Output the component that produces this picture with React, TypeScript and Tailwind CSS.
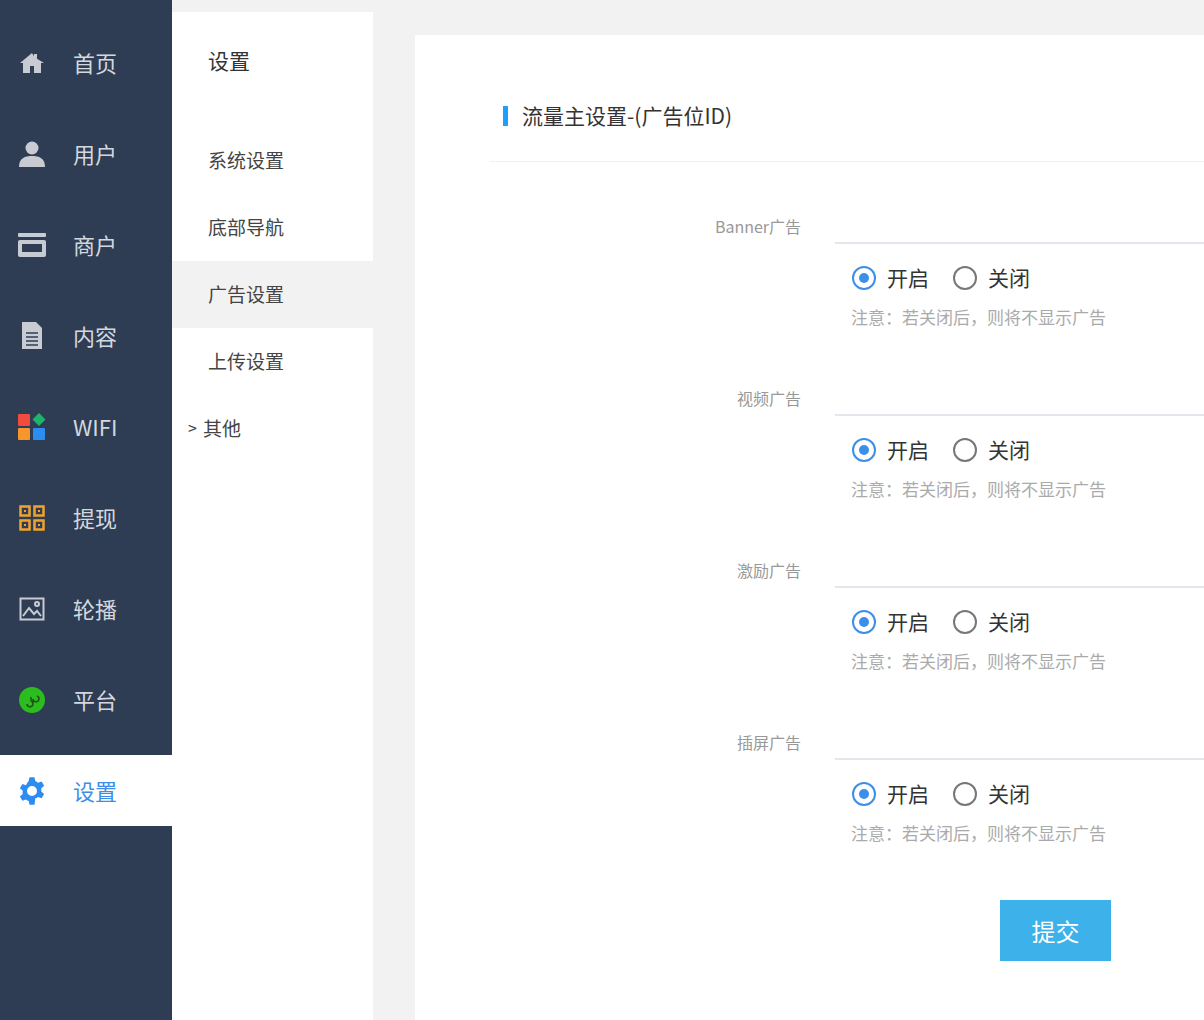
import React from "react";

const F = { fontFamily: '"Noto Sans CJK SC", "Liberation Sans", sans-serif' };

function Icon({ k }: { k: string }) {
  switch (k) {
    case "home":
      return (<svg width="26" height="24" viewBox="0 0 26 24"><path d="M13 2 L1 12 h3 v10 h7 v-7 h4 v7 h7 V12 h3 L18 7.8 V3 h-3 v2.3z" fill="#c8ccd2" /></svg>);
    case "user":
      return (<svg width="28" height="28" viewBox="0 0 28 28"><circle cx="14" cy="8" r="6.5" fill="#c8ccd2" /><path d="M1 27 C1 18 7 16 14 16 C21 16 27 18 27 27z" fill="#c8ccd2" /></svg>);
    case "shop":
      return (<svg width="30" height="28" viewBox="0 0 30 28"><rect x="1" y="2" width="28" height="4" rx="1" fill="#c8ccd2" /><rect x="1" y="9" width="28" height="17" rx="2" fill="#c8ccd2" /><rect x="5" y="13" width="20" height="8" fill="#2e3d54" /></svg>);
    case "doc":
      return (<svg width="24" height="30" viewBox="0 0 24 30"><path d="M2 1 h14 l6 6 v21 h-20z" fill="#c8ccd2" /><path d="M6 12h12M6 16h12M6 20h12M6 24h12" stroke="#2e3d54" strokeWidth="1.5" /></svg>);
    case "wifi":
      return (<svg width="30" height="30" viewBox="0 0 30 30"><rect x="1" y="2" width="12" height="12" rx="1" fill="#ef4b3f" /><rect x="1" y="16" width="12" height="12" rx="1" fill="#f7962d" /><rect x="16" y="16" width="12" height="12" rx="1" fill="#2c8df0" /><path d="M22 1 L28.5 7.5 L22 14 L15.5 7.5z" fill="#1fb36a" /></svg>);
    case "grid":
      return (<svg width="26" height="26" viewBox="0 0 26 26" fill="none" stroke="#f0a22e" strokeWidth="2.5"><rect x="1.5" y="1.5" width="9" height="9" /><rect x="15.5" y="1.5" width="9" height="9" /><rect x="1.5" y="15.5" width="9" height="9" /><rect x="15.5" y="15.5" width="9" height="9" /><g fill="#f0a22e" stroke="none"><rect x="5" y="5" width="2" height="2"/><rect x="19" y="5" width="2" height="2"/><rect x="5" y="19" width="2" height="2"/><rect x="19" y="19" width="2" height="2"/></g></svg>);
    case "img":
      return (<svg width="26" height="24" viewBox="0 0 26 24" fill="none" stroke="#c8ccd2" strokeWidth="2"><rect x="1.5" y="1.5" width="23" height="21" /><path d="M4 19 L10 11 L15 17 L18 14 L22 19" /><circle cx="18" cy="7" r="2" /></svg>);
    case "plat":
      return (<svg width="28" height="28" viewBox="0 0 28 28"><circle cx="14" cy="14" r="13" fill="#2dbc1f" /><path d="M9 18 a3 3 0 1 0 4 -3 M15 13 a3 3 0 1 0 4 -3 M13 15 v-4 M15 13 v4" stroke="#1a5a14" strokeWidth="1.6" fill="none" /></svg>);
    case "gear":
      return (<svg width="30" height="30" viewBox="0 0 24 24"><path fill="#2d8cf0" fillRule="evenodd" d="M10 1h4l.6 3a8 8 0 0 1 2.2 1.3l2.9-1 2 3.4-2.3 2a8 8 0 0 1 0 2.6l2.3 2-2 3.4-2.9-1a8 8 0 0 1-2.2 1.3L14 23h-4l-.6-3a8 8 0 0 1-2.2-1.3l-2.9 1-2-3.4 2.3-2a8 8 0 0 1 0-2.6l-2.3-2 2-3.4 2.9 1A8 8 0 0 1 9.4 4zM12 8a4 4 0 1 0 0 8 4 4 0 0 0 0-8z" /></svg>);
  }
  return null;
}

const nav = [
  ["home", "首页"], ["user", "用户"], ["shop", "商户"], ["doc", "内容"], ["wifi", "WIFI"],
  ["grid", "提现"], ["img", "轮播"], ["plat", "平台"], ["gear", "设置"],
];

const groups = ["Banner广告", "视频广告", "激励广告", "插屏广告"];

export default function App() {
  return (
    <div style={F} className="flex w-[1204px] h-[1020px] overflow-hidden bg-[#f2f2f2]">
      <div className="w-[172px] shrink-0 bg-[#2e3d54] pt-[17px]">
        {nav.map(([k, t], i) => {
          const active = i === 8;
          return (
            <div key={t} className="h-[91px] flex items-center">
              <div className={`w-full h-[71px] flex items-center pl-[17px] ${active ? "bg-white" : ""}`}>
                <div className="w-[30px] flex justify-center"><Icon k={k} /></div>
                <span className={`ml-[26px] text-[22px] ${active ? "text-[#3d8ee8]" : "text-[#d4d8de]"}`}>{t}</span>
              </div>
            </div>
          );
        })}
      </div>
      <div className="flex-1 flex flex-col">
        <div className="h-[12px] shrink-0" />
        <div className="flex-1 flex">
          <div className="w-[201px] shrink-0 bg-white">
            <div className="h-[98px] flex items-center pl-[36px] text-[21px] text-[#333] pb-[4px] pt-[3px]">设置</div>
            <div className="pt-[17px]">
              {["系统设置", "底部导航", "广告设置", "上传设置"].map((t) => (
                <div key={t} className={`h-[67px] flex items-center pl-[36px] text-[19px] text-[#444] ${t === "广告设置" ? "bg-[#f2f2f2]" : ""}`}>{t}</div>
              ))}
              <div className="h-[67px] flex items-center pl-[16px] text-[19px] text-[#444]">
                <span className="text-[16px] mr-[6px] -mt-[4px]">&gt;</span>其他
              </div>
            </div>
          </div>
          <div className="flex-1 pl-[42px] pt-[23px]">
            <div className="bg-white h-full pl-[75px]">
              <div className="h-[127px] flex items-center border-b border-[#f0f0f0] -ml-[0px] pl-[13px] pt-[42px] pb-[6px] box-border">
                <div className="w-[5px] h-[20px] bg-[#1e9fff] mr-[14px]" />
                <span className="text-[21px] text-[#333]">流量主设置-(广告位ID)</span>
              </div>
              <div className="pt-[52px]">
                {groups.map((g) => (
                  <div key={g} className="h-[172px]">
                    <div className="flex items-end">
                      <div className="w-[311px] text-right text-[16px] text-[#999] pb-[6px]">{g}</div>
                      <div className="ml-[34px] flex-1 h-[30px] border-b-2 border-[#e4e6ee]" />
                    </div>
                    <div className="ml-[362px] mt-[18px] flex items-center text-[21px] text-[#333]">
                      <span className="w-[24px] h-[24px] rounded-full border-2 border-[#3d8ee8] flex items-center justify-center"><span className="w-[10px] h-[10px] rounded-full bg-[#3d8ee8]" /></span>
                      <span className="ml-[11px]">开启</span>
                      <span className="ml-[24px] w-[24px] h-[24px] rounded-full border-2 border-[#777]" />
                      <span className="ml-[11px]">关闭</span>
                    </div>
                    <div className="ml-[361px] mt-[10px] text-[17px] text-[#aaa]">注意：若关闭后，则将不显示广告</div>
                  </div>
                ))}
                <div className="ml-[510px] mt-[-2px] w-[111px] h-[61px] bg-[#3cb1ea] text-white text-[24px] flex items-center justify-center">提交</div>
              </div>
            </div>
          </div>
        </div>
      </div>
    </div>
  );
}
